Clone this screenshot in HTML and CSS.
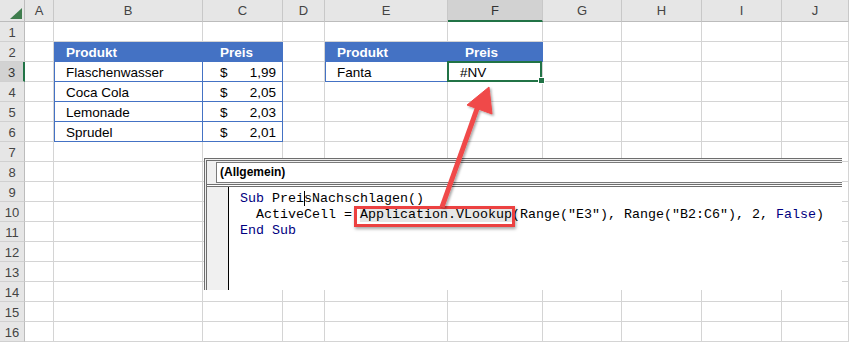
FILE: index.html
```html
<!DOCTYPE html>
<html>
<head>
    <title>SVERWEIS in VBA</title>
    <link rel="stylesheet" href="styles.css">
</head>
<body>
    <div class="sheet" id="sheet"></div>

    <div class="vbe">
        <div class="vbe-bar">
            <div class="combo">(Allgemein)</div>
        </div>
        <div class="vbe-code">
            <div class="gutter"></div>
<pre class="code"><span class="kw">Sub</span> Prei<span class="caret">s</span>Nachschlagen()
  ActiveCell = <span class="mark">Application.VLookup</span>(Range("E3"), Range("B2:C6"), 2, <span class="kw">False</span>)
<span class="kw">End Sub</span></pre>
        </div>
    </div>

    <svg class="arrow" width="849" height="342" viewBox="0 0 849 342">
        <defs>
            <filter id="shadow" x="-50%" y="-50%" width="200%" height="200%">
                <feDropShadow dx="1.5" dy="1.5" stdDeviation="1.2" flood-color="#000" flood-opacity="0.35"/>
            </filter>
        </defs>
        <g filter="url(#shadow)" fill="#f04848" stroke="#f04848">
            <line x1="442" y1="207" x2="478" y2="106" stroke-width="5"/>
            <polygon points="489,87 467,105 492,114" stroke-width="1" stroke-linejoin="round"/>
        </g>
    </svg>

    <script>
        const widths = [25, 29, 149, 80, 42, 123, 95, 79, 80, 80, 67];
        const letters = ['', 'A', 'B', 'C', 'D', 'E', 'F', 'G', 'H', 'I', 'J'];
        const products = [
            ['Flaschenwasser', '1,99'],
            ['Coca Cola', '2,05'],
            ['Lemonade', '2,03'],
            ['Sprudel', '2,01']
        ];

        const sheet = document.getElementById('sheet');
        sheet.style.gridTemplateColumns = widths.map(w => w + 'px').join(' ');

        function addCell(cls, html) {
            const d = document.createElement('div');
            d.className = cls;
            if (html) d.innerHTML = html;
            sheet.appendChild(d);
            return d;
        }

        // Spaltenköpfe
        for (let c = 0; c < letters.length; c++) {
            if (c === 0) {
                addCell('corner', '<span class="tri"></span>');
            } else {
                addCell('col-head' + (letters[c] === 'F' ? ' active' : ''), letters[c]);
            }
        }

        for (let r = 1; r <= 16; r++) {
            addCell('row-head' + (r === 3 ? ' active' : ''), r);
            for (let c = 1; c < letters.length; c++) {
                const col = letters[c];
                let cls = 'cell';
                let html = '';

                if (r === 2 && (col === 'B' || col === 'E')) {
                    cls += ' th';
                    html = 'Produkt';
                } else if (r === 2 && (col === 'C' || col === 'F')) {
                    cls += ' th price-head';
                    html = 'Preis';
                } else if (r >= 3 && r <= 6 && col === 'B') {
                    cls += ' td first';
                    html = products[r - 3][0];
                } else if (r >= 3 && r <= 6 && col === 'C') {
                    cls += ' td money';
                    html = '<span>$</span><span>' + products[r - 3][1] + '</span>';
                } else if (r === 3 && col === 'E') {
                    cls += ' td first open';
                    html = 'Fanta';
                } else if (r === 3 && col === 'F') {
                    cls += ' td open sel';
                    html = '#NV<span class="handle"></span>';
                }
                addCell(cls, html);
            }
        }
    </script>
</body>
</html>
```

FILE: styles.css
```css
body {
    margin: 0;
    width: 849px;
    height: 342px;
    overflow: hidden;
    position: relative;
    background: #fff;
    font-family: "Liberation Sans", Arial, sans-serif;
}

.sheet {
    display: grid;
    grid-template-rows: 22px repeat(16, 20px);
}

.sheet > div {
    box-sizing: border-box;
    border-right: 1px solid #d4d4d4;
    border-bottom: 1px solid #d4d4d4;
}

/* Kopfzeilen */
.corner {
    background: #e6e6e6;
    position: relative;
    border-right-color: #bcbcbc !important;
    border-bottom-color: #bcbcbc !important;
}

.tri {
    position: absolute;
    left: 10px;
    top: 8px;
    width: 0;
    height: 0;
    border-left: 12px solid transparent;
    border-bottom: 11px solid #3f7d4e;
}

.col-head {
    background: #e6e6e6;
    border-right-color: #c8c8c8 !important;
    border-bottom-color: #bcbcbc !important;
    color: #444;
    font-size: 13px;
    text-align: center;
    line-height: 22px;
}

.col-head.active {
    background: #d2d2d2;
    border-bottom: 2px solid #217346 !important;
    color: #333;
}

.row-head {
    background: #e6e6e6;
    border-right-color: #bcbcbc !important;
    border-bottom-color: #d0d0d0 !important;
    color: #444;
    font-size: 13px;
    text-align: center;
    line-height: 21px;
}

.row-head.active {
    background: #d2d2d2;
    border-right: 2px solid #217346 !important;
    color: #333;
}

/* Zellen */
.cell {
    font-size: 13.5px;
    line-height: 20px;
    padding: 1px 0 0 12px;
    color: #000;
    white-space: nowrap;
}

.th {
    background: #4472c4;
    border-right-color: #4472c4 !important;
    border-bottom-color: #4472c4 !important;
    color: #fff;
    font-weight: bold;
}

.price-head {
    padding-left: 17px;
}

.td {
    border-right-color: #4472c4 !important;
    border-bottom-color: #4472c4 !important;
}

.td.first {
    box-shadow: inset 1px 0 #4472c4;
}

.td.open {
    border-right-color: #d4d4d4 !important;
}

.money {
    display: flex;
    justify-content: space-between;
    padding: 1px 6px 0 17px;
}

.sel {
    position: relative;
}

.sel::before {
    content: "";
    position: absolute;
    top: -1px;
    left: -1px;
    right: 0;
    bottom: -1px;
    border: 2px solid #217346;
}

.handle {
    position: absolute;
    right: -3px;
    bottom: -3px;
    width: 5px;
    height: 5px;
    background: #217346;
    border: 1px solid #fff;
}

/* VBA-Editor */
.vbe {
    position: absolute;
    left: 204px;
    top: 158px;
    width: 638px;
    height: 132px;
    background: #f0f0f0;
    border-top: 3px double #6e6e6e;
    border-left: 3px double #6e6e6e;
    box-sizing: border-box;
    display: flex;
    flex-direction: column;
}

.vbe-bar {
    padding: 1px 0 0 9px;
    height: 22px;
}

.combo {
    height: 21px;
    background: #fff;
    border: 1px solid #7a7a7a;
    border-right: none;
    box-sizing: border-box;
    font-size: 12px;
    font-weight: bold;
    line-height: 19px;
    padding-left: 3px;
}

.vbe-code {
    flex: 1;
    display: flex;
    border-top: 3px double #6e6e6e;
    background: #fff;
}

.gutter {
    width: 21px;
    background: #f0f0f0;
    border-right: 1px solid #000;
}

.code {
    margin: 0;
    padding: 4px 0 0 11px;
    font-family: "Liberation Mono", "Courier New", monospace;
    font-size: 13.33px;
    line-height: 16px;
    color: #000;
}

.kw {
    color: #00007f;
}

/* Textcursor vor dem "s" */
.caret {
    box-shadow: inset 1px 0 #000;
}

.mark {
    position: relative;
    background: #e6e6e6;
}

.mark::after {
    content: "";
    position: absolute;
    top: -1px;
    bottom: -5px;
    left: -6px;
    right: -3px;
    border: 3px solid #ec4141;
    box-shadow: 1px 2px 3px rgba(0, 0, 0, 0.35);
}

.arrow {
    position: absolute;
    left: 0;
    top: 0;
    pointer-events: none;
}
```
